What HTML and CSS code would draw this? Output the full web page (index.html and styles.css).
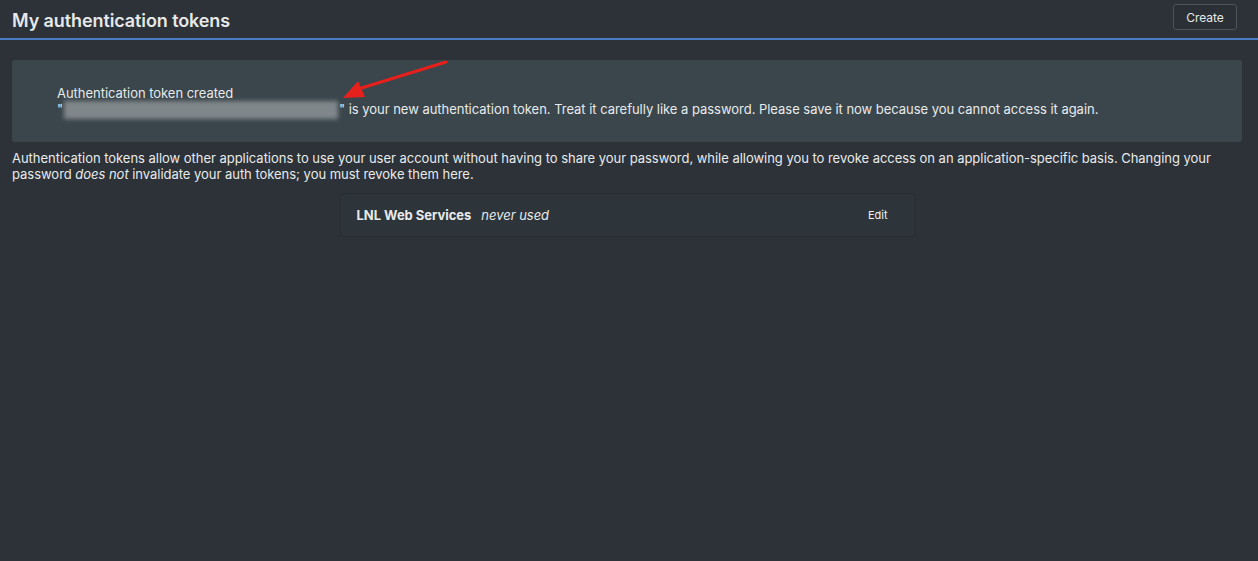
FILE: index.html
```html
<!DOCTYPE html>
<html>
<head>
<meta charset="utf-8">
<link rel="stylesheet" href="styles.css">
</head>
<body>
<header class="topbar">
  <h1 class="title">My authentication tokens</h1>
  <button class="btn">Create</button>
</header>
<main class="content">
  <div class="alert">
    <div class="alert-title">Authentication token created</div>
    <div class="alert-body">"<span class="token-blur"></span>" is your new authentication token. Treat it carefully like a password. Please save it now because you cannot access it again.</div>
  </div>
  <p class="intro">Authentication tokens allow other applications to use your user account without having to share your password, while allowing you to revoke access on an application-specific basis. Changing your password <em>does not</em> invalidate your auth tokens; you must revoke them here.</p>
  <div class="token-row">
    <div class="token-info"><strong class="token-name">LNL Web Services</strong><em class="token-used">never used</em></div>
    <a class="edit">Edit</a>
  </div>
</main>
<svg class="arrow" width="120" height="50" viewBox="0 0 120 50">
  <line x1="113" y1="5" x2="22" y2="33" stroke="#e8201c" stroke-width="3" stroke-linecap="round"/>
  <polygon points="10,41 25,24 32,40" fill="#e8201c"/>
</svg>
</body>
</html>
```
FILE: styles.css
```css
html, body {
  margin: 0;
  padding: 0;
  background: #2c3238;
  color: #e8eaeb;
  font-family: Inter, "Noto Sans", sans-serif;
  font-size: 13px;
  line-height: 16px;
  letter-spacing: -0.03px;
}
.topbar {
  display: flex;
  align-items: center;
  justify-content: space-between;
  padding: 0 21px 0 12px;
  border-bottom: 2px solid #4d7cc6;
  box-sizing: border-box;
  height: 40px;
}
.title {
  margin: 4px 0 0;
  font-size: 18px;
  font-weight: 600;
  color: #e6e8e9;
  letter-spacing: -0.1px;
}
.btn {
  width: 64px;
  height: 26px;
  background: #2a3035;
  color: #e6e8e9;
  border: 1px solid #4b5358;
  border-radius: 3px;
  font-family: Inter, sans-serif;
  font-size: 12px;
  padding: 0;
  margin-bottom: 4px;
}
.content {
  padding: 20px 16px 0 12px;
}
.alert {
  background: #3a464c;
  border-radius: 3px;
  padding: 25px 45px 23px;
}
.token-blur {
  display: inline-block;
  width: 274px;
  height: 18px;
  vertical-align: -5px;
  background: #80878a;
  filter: blur(2px);
  margin: 0 1px;
}
.intro {
  margin: 8px 0 11px;
  color: #e8eaeb;
}
.token-row {
  width: 575px;
  height: 44px;
  box-sizing: border-box;
  margin: 0 auto;
  display: flex;
  align-items: center;
  justify-content: space-between;
  padding: 0 26px 0 16px;
  background: #2e353a;
  border: 1px solid #262c30;
  border-radius: 3px;
}
.token-name {
  font-weight: 700;
  margin-right: 10px;
}
.token-used {
  font-style: italic;
}
.edit {
  font-size: 11px;
  color: #f0f2f3;
}
.arrow {
  position: absolute;
  left: 333px;
  top: 57px;
}
```
